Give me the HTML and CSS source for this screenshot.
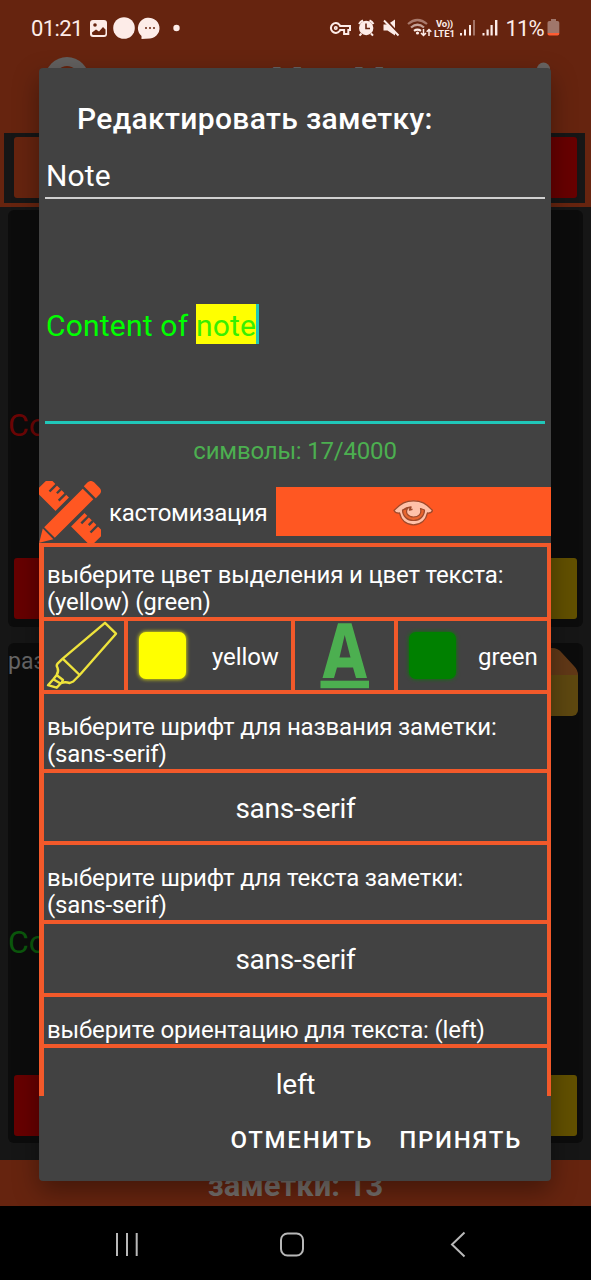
FILE: index.html
```html
<!DOCTYPE html>
<html lang="ru">
<head>
<meta charset="utf-8">
<title>Редактировать заметку</title>
<link rel="stylesheet" href="styles.css">
</head>
<body>
<div class="screen">
  <div class="app">
    <header class="app-header">
      <div class="status">
        <span class="clock">01:21</span>
        <svg class="status-left" width="100" height="26" viewBox="88 15 100 26">
          <g fill="#fdece8">
            <rect x="91" y="20" width="17" height="17" rx="3"/>
            <circle cx="125" cy="28" r="10.8"/>
            <path d="M142.500 39V36a10.800 10.500 0 1 1 8.500 2.600Z"/>
            <circle cx="177.500" cy="28" r="3.200"/>
          </g>
          <g fill="#66240f">
            <circle cx="96" cy="25" r="1.800"/>
            <path d="M93 32.500l4-3 3 2 4-4.500 2.500 2.500v4a1.500 1.500 0 0 1-1.500 1.500H94.500a1.500 1.500 0 0 1-1.500-1.500Z"/>
            <circle cx="147" cy="28" r="1"/><circle cx="151" cy="28" r="1"/><circle cx="155" cy="28" r="1"/>
          </g>
        </svg>
        <svg class="status-right" width="172" height="28" viewBox="330 14 172 28">
          <g fill="none" stroke="#fdece8" stroke-width="2">
            <path d="M340.500 24.800a4.900 4.900 0 1 0 0 6.400l.6-1.200h4v4h4.200v-4h1.700v-4h-9.900Z"/>
            <circle cx="336.800" cy="28" r="1.200" stroke-width="1.600"/>
          </g>
          <circle cx="367.200" cy="28" r="7.200" fill="#fdece8"/>
          <path d="M360 24a10 10 0 0 1 4-3.500M370.500 20.500a10 10 0 0 1 4 3.500M362.500 33.500l-2 2.200M372 33.500l2 2.200" stroke="#fdece8" stroke-width="2" fill="none"/>
          <path d="M367 23.500v5h4" fill="none" stroke="#66240f" stroke-width="1.600"/>
          <path d="M384.500 24.500h4l7.500-5v16l-7.500-5h-4Z" fill="#fdece8"/>
          <path d="M386 19l14 15" stroke="#66240f" stroke-width="2"/>
          <path d="M385 20.500l14.500 15" stroke="#fdece8" stroke-width="1.900"/>
          <g fill="none" stroke-width="2.200">
            <path d="M409 24q9.500-8 19 0" stroke="#a9796b"/>
            <path d="M412 27.500q6.500-5.500 13 0" stroke="#c5a297"/>
            <path d="M415 30.800q3.500-2.500 7 0" stroke="#fdece8"/>
            <path d="M424.500 29v6.500m-2.500-2.500l2.500 2.500 2.500-2.500M430 36v-6.500m-2.300 2.300l2.300-2.300 2.300 2.300" stroke="#fdece8" stroke-width="1.500"/>
          </g>
          <circle cx="418.500" cy="33" r="1.600" fill="#fdece8"/>
          <g class="net"><text x="437" y="27" textLength="17">Vo))</text><text x="435" y="36.500" textLength="21">LTE1</text></g>
          <g fill="#fdece8">
            <rect x="461" y="33" width="2" height="2.500"/><rect x="465" y="29.500" width="2" height="6"/><rect x="470" y="25" width="2" height="10.500"/><rect x="474" y="20" width="2" height="15.500" opacity=".4"/>
            <rect x="483.500" y="33" width="2" height="2.500"/><rect x="487.500" y="29.500" width="2.200" height="6"/><rect x="491.500" y="25" width="2.200" height="10.500"/><rect x="496" y="20" width="2.400" height="15.500"/>
          </g>
        </svg>
        <span class="percent">11%</span>
        <svg class="battery" width="13" height="18" viewBox="0 0 13 18"><path d="M4 0h5v2h1.500a1.800 1.800 0 0 1 1.800 1.800V14H.5V3.800A1.800 1.800 0 0 1 2.300 2H4Z" fill="#a0766b"/><path d="M.5 14h11.800v.7a1.800 1.800 0 0 1-1.800 1.800H2.300A1.800 1.800 0 0 1 .5 14.700Z" fill="#ff5c33"/></svg>
      </div>
      <svg class="app-title" width="591" height="22" viewBox="0 56 591 22">
        <circle cx="67" cy="79" r="22" fill="#62605f"/><circle cx="67" cy="78" r="12" fill="#66240f"/>
        <text x="271 306 353" y="93">MyM</text>
        <circle cx="543.500" cy="69" r="6.500" fill="#686462"/>
      </svg>
      <div class="tools"><i class="tool orange"></i><i class="tool red"></i></div>
    </header>
    <main class="notes">
      <article class="note first">
        <p class="preview red-text">Content</p>
        <div class="note-actions"><i class="del"></i><i class="edit"></i></div>
      </article>
      <article class="note second">
        <div class="note-head"><span>размер</span>
          <svg width="50" height="68" viewBox="528 648 50 68"><path d="M528 674h50v36a6 6 0 0 1-6 6h-44Z" fill="#5e4810"/><path d="M528 648h24q6 0 10 5l12 13q4 4 4 9h-50Z" fill="#613817"/></svg>
        </div>
        <p class="preview green-text">Content</p>
        <div class="note-actions"><i class="del"></i><i class="edit"></i></div>
      </article>
    </main>
    <footer class="counter"><span>заметки: 13</span></footer>
    <nav class="navbar">
      <svg width="591" height="74" viewBox="0 1206 591 74" fill="none" stroke="#b8b8b8" stroke-width="2">
        <path d="M117 1233v23M127 1233v23M136.700 1233v23"/><rect x="281" y="1233.500" width="22" height="22" rx="6.500"/><path d="M464.500 1232.500l-12.500 12 12.500 12"/>
      </svg>
    </nav>
  </div>

  <section class="dialog" role="dialog">
    <h1><span>Редактировать заметку:</span></h1>
    <div class="field name"><span>Note</span></div>
    <div class="field content"><span>Content of <mark>note</mark></span></div>
    <p class="symbols"><span>символы: 17/4000</span></p>
    <div class="custom">
      <svg class="tools-icon" width="62" height="62" viewBox="0 0 62 62">
        <g transform="translate(31 31) rotate(45)">
          <path d="M-34-9.500H34a5 5 0 0 1 5 5V6a3.500 3.500 0 0 1-3.500 3.500H-35.500A3.500 3.500 0 0 1-39 6V-4.500a5 5 0 0 1 5-5Z" fill="#ff5722"/>
          <path d="M-29-10V0M-22.500-10v6M-16-10V0M16-10V0M22.500-10v6M29-10V0" stroke="#424242" stroke-width="2.400"/>
        </g>
        <g transform="translate(31 31) rotate(-45)">
          <path d="M-30-11H29V11H-30Z" fill="#424242"/>
          <path d="M-43.500 0L-31-7.500V7.500ZM-29-7.500H25.500V7.500H-29ZM28-8.500H33.500a4.500 4.500 0 0 1 4.500 4.500V4a4.500 4.500 0 0 1-4.500 4.500H28Z" fill="#ff5722"/>
        </g>
      </svg>
      <span class="custom-label">кастомизация</span>
      <div class="eye">
        <svg width="40" height="28" viewBox="393 499 40 28" stroke="#9f492b" stroke-linejoin="round">
          <path d="M394 510.500C401 503 406 500.800 413.500 500.800S426 503 432.500 510.500q-1 3-5 2.500C426 520 421 524.800 413.500 524.800S401 520 399.500 513q-4 .5-5.500-2.500Z" fill="#ffc1a9" stroke-width="1.300"/>
          <path d="M402.500 510C402.500 516 407 520.500 413.500 520.500S424.500 516 424.500 510L420.500 508.500C422 514 418.500 517 413.500 517 408 517 405 513 407.500 508.500Z" fill="#e8652f" stroke-width="1.200"/>
          <path d="M403 510q3-2.500 8-3l-1.500 3 3-.8" fill="none" stroke-width="1.500"/>
        </svg>
      </div>
    </div>
    <div class="options">
      <div class="row prompt r1"><p><span class="t1">выберите цвет выделения и цвет текста:</span><br><span>(yellow) (green)</span></p></div>
      <div class="row colors">
        <div class="cell c1"><svg width="74" height="69" viewBox="44 621 74 69" fill="none" stroke="#eee33c" stroke-width="2.400" stroke-linejoin="round"><path d="M105 622.800L62.700 658.700l-5.200 5q-1.500 2 0 4 1.500 4-1 7.500l-3.200 4-5.300 6 8.700 2.500 4.500-4.700q4-1.500 8.500 0l3.500-1.500 6.500-6.500L116 633.700Z"/><path d="M62.700 658.700l17 16.300M53.300 679.200l8 4.800M56.500 675l6.500 5-1.800 3.500"/></svg></div>
        <div class="cell c2"><i class="swatch yellow"></i><span>yellow</span></div>
        <div class="cell c3"><svg width="50" height="69" viewBox="320 621 50 69" fill="#4caf50"><path fill-rule="evenodd" d="M338 623.300h13.500L367 678H356l-3-10.500h-16L334 678h-11.500ZM344.700 635L339.500 657.500h11Z"/><rect x="320.500" y="680.700" width="48.500" height="7.500"/></svg></div>
        <div class="cell c4"><i class="swatch green"></i><span>green</span></div>
      </div>
      <div class="row prompt r3"><p><span class="t3">выберите шрифт для названия заметки:</span><br><span>(sans-serif)</span></p></div>
      <div class="row choice r4"><span>sans-serif</span></div>
      <div class="row prompt r5"><p><span class="t5">выберите шрифт для текста заметки:</span><br><span>(sans-serif)</span></p></div>
      <div class="row choice r6"><span>sans-serif</span></div>
      <div class="row prompt r7"><p><span class="t7">выберите ориентацию для текста: (left)</span></p></div>
      <div class="row choice r8"><span>left</span></div>
    </div>
    <div class="buttons"><span class="cancel">ОТМЕНИТЬ</span><span class="accept">ПРИНЯТЬ</span></div>
  </section>
</div>
</body>
</html>
```
FILE: styles.css
```css
* { box-sizing: border-box; }
body { margin: 0; background: #000; font-family: Roboto, "Noto Sans", sans-serif; color: #fff; }
h1, p { margin: 0; font-weight: 400; }
.screen { position: relative; width: 591px; height: 1280px; overflow: hidden; white-space: nowrap; }
.app { display: flex; flex-direction: column; height: 1280px; background: #161616; }
.app-header { height: 207px; background: #66240f; flex: none; }
.status { height: 56px; display: flex; align-items: center; padding: 0 31px; color: #fdece8; }
.clock { width: 57px; font-size: 22px; letter-spacing: -.6px; }
.status-left { flex: none; margin-right: 142px; }
.status-right { flex: none; }
.net { fill: #fdece8; font: 700 9.500px Roboto, sans-serif; }
.percent { width: 45px; padding-left: 4px; font-size: 22px; letter-spacing: -.8px; }
.battery { flex: none; margin-left: 1px; }
.app-title { display: block; margin-bottom: 55px; fill: #686462; font: 700 37px Roboto, sans-serif; }
.tools { display: flex; justify-content: space-between; width: 581px; height: 70px; margin-left: 4px; padding: 4px 8px 5px 10px; background: #161616; }
.tool { width: 80px; border-radius: 3px; }
.orange { background: #66240f; }
.red { background: #670000; }
.notes { flex: 1; padding: 3px 8px 0; }
.note { display: flex; flex-direction: column; background: #0c0c0c; border-radius: 6px; }
.first { height: 417px; margin-bottom: 16px; }
.second { height: 500px; }
.preview { font-size: 32px; line-height: 40px; }
.first .preview { margin-top: 195px; }
.red-text { color: #6c0505; }
.green-text { color: #0b570c; }
.note-head { display: flex; justify-content: space-between; height: 72px; padding: 5px 5px 0 0; font-size: 23px; line-height: 28px; color: #666; }
.second .preview { margin-top: 207px; }
.note-actions { display: flex; justify-content: space-between; margin-top: auto; padding: 0 6px 8px; }
.second .note-actions { padding-bottom: 7px; }
.note-actions i { width: 80px; height: 61px; border-radius: 3px; }
.del { background: #670000; }
.edit { background: #625000; }
.counter { height: 46px; background: #66240f; text-align: center; font-size: 31px; font-weight: 700; line-height: 51px; color: #76706c; }
.navbar { height: 74px; background: #000; }
.dialog { position: absolute; left: 39px; top: 68px; width: 512px; height: 1113px; padding-top: 32px; background: #424242; border-radius: 4px; box-shadow: 0 10px 26px rgba(0, 0, 0, .35); }
h1 { height: 42px; padding-left: 38px; font-size: 30px; font-weight: 500; line-height: 37px; letter-spacing: .34px; }
.field { margin: 0 6px; padding-left: 1px; font-size: 30px; }
.name { height: 57px; line-height: 67px; border-bottom: 2px solid #d0d0d0; letter-spacing: .1px; }
.content { height: 225px; padding-top: 107px; line-height: 40px; border-bottom: 3px solid #20c7b9; color: #0f0; letter-spacing: .2px; }
.content mark { display: inline-block; height: 40px; margin-top: -2px; padding-top: 2px; line-height: 40px; vertical-align: top; background: #ff0; color: #38ef00; border-right: 3px solid #20c7b9; }
.symbols { height: 57px; text-align: center; font-size: 24px; line-height: 54px; letter-spacing: -.2px; color: #4caf50; }
.custom { display: flex; height: 62px; }
.tools-icon { flex: none; }
.custom-label { width: 175px; padding-left: 8px; font-size: 24px; line-height: 64px; letter-spacing: -.25px; }
.eye { display: flex; align-items: center; justify-content: center; flex: 1; height: 49px; margin-top: 6px; padding: 2px 1px 0 0; background: #ff5722; }
.options { height: 553px; border: solid #f2592a; border-width: 0 4px 0 5px; }
.row { border-top: 4px solid #f2592a; }
.prompt { padding: 15px 0 0 3px; font-size: 24px; line-height: 27px; letter-spacing: -.17px; }
.r1 { height: 74px; }
.colors { height: 73px; display: flex; font-size: 24px; letter-spacing: -.1px; }
.colors span { padding-top: 2px; }
.cell { display: flex; align-items: center; }
.cell + .cell { border-left: 4px solid #f2592a; }
.c1 { width: 80px; }
.c2 { width: 167px; padding-left: 11px; }
.c3 { width: 103px; justify-content: center; }
.c4 { flex: 1; padding-left: 11px; }
.swatch { width: 47px; height: 47px; border-radius: 7px; margin-right: 26px; }
.c4 .swatch { margin-right: 22px; }
.yellow { background: #ff0; box-shadow: 0 0 4px #ff0; }
.green { background: #008000; box-shadow: 0 0 4px #008000; }
.r3, .r5 { height: 79px; padding-top: 20px; }
.r5 { padding-top: 20px; }
.r4 { height: 72px; }
.r6 { height: 73px; }
.r7 { height: 51px; padding-top: 20px; }
.r8 { height: 52px; }
.choice { text-align: center; font-size: 28px; line-height: 72px; letter-spacing: -.25px; }
.r8 { line-height: 73px; }
.buttons { display: flex; justify-content: flex-end; height: 86px; padding-right: 29px; gap: 26px; font-size: 24px; font-weight: 500; line-height: 88px; letter-spacing: 1.75px; }
```
